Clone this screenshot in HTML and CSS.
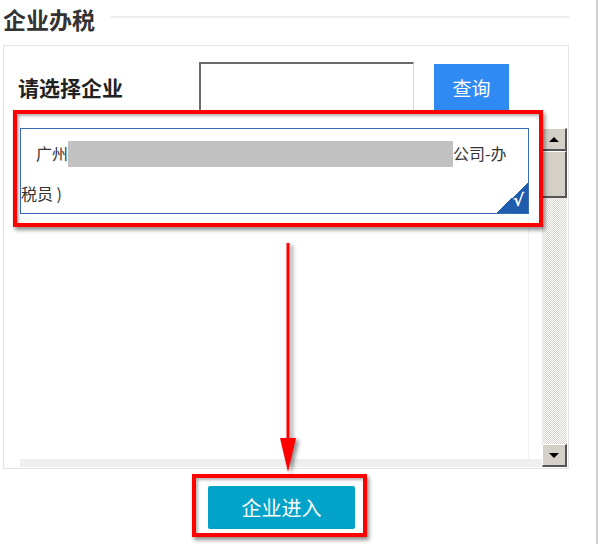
FILE: index.html
```html
<!DOCTYPE html>
<html lang="zh-CN">
<head>
  <meta charset="UTF-8">
  <title>企业办税</title>
  <link rel="stylesheet" href="styles.css">
</head>
<body>
  <div class="page">
    <div class="section-head">
      <h2>企业办税</h2>
      <div class="head-line"></div>
    </div>

    <div class="panel">
      <div class="search-row">
        <label class="search-label">请选择企业</label>
        <input class="search-input" type="text">
        <button class="btn-query">查询</button>
      </div>

      <div class="list-wrap">
        <div class="list">
          <div class="list-item">
            <span class="name">广州<span class="mask"></span>公司-办<br>税员 )</span>
            <span class="corner"><span class="tick">√</span></span>
          </div>
          <div class="list-fill"></div>
          <div class="list-hscroll"></div>
        </div>
        <div class="vscroll">
          <div class="sb-btn"><span class="arr-up"></span></div>
          <div class="sb-thumb"></div>
          <div class="sb-track"></div>
          <div class="sb-btn"><span class="arr-down"></span></div>
        </div>
      </div>
    </div>

    <div class="enter-row">
      <button class="btn-enter">企业进入</button>
    </div>

    <!-- annotations drawn over the screenshot -->
    <div class="mark mark-list"></div>
    <div class="mark mark-enter"></div>
    <svg class="arrow" width="24" height="236" viewBox="0 0 24 236">
      <line x1="11" y1="3" x2="11" y2="205" stroke="#f00" stroke-width="3"/>
      <polygon points="3,198 19,198 11,232" fill="#f00"/>
    </svg>
  </div>
</body>
</html>
```

FILE: styles.css
```css
* {
  box-sizing: border-box;
}
body {
  margin: 0;
  font-family: "Microsoft YaHei", "Noto Sans CJK SC", sans-serif;
  color: #333;
  background: #fff;
}
.page {
  position: relative;
  width: 598px;
  height: 544px;
  border-right: 2px solid #cfcfcf;
  padding: 6px 0 0 3px;
}
.section-head {
  display: flex;
  align-items: center;
  height: 26px;
}
.section-head h2 {
  margin: 0;
  font-size: 23px;
  font-weight: bold;
  color: #333;
  line-height: 26px;
}
.head-line {
  flex: 1;
  height: 2px;
  background: #eee;
  margin: 0 27px 0 16px;
  position: relative;
  top: -2px;
}
.panel {
  margin-top: 13px;
  width: 566px;
  height: 424px;
  border: 1px solid #e3e3e3;
  padding-top: 16px;
}
.search-row {
  display: flex;
  align-items: center;
  height: 50px;
}
.search-label {
  width: 195px;
  padding-left: 14px;
  font-size: 21px;
  font-weight: bold;
  color: #222;
}
.search-input {
  width: 215px;
  height: 50px;
  border-top: 2px solid #6b6b6b;
  border-left: 2px solid #6b6b6b;
  border-right: 1px solid #d8d8d8;
  border-bottom: 1px solid #d8d8d8;
  background: #fff;
  outline: none;
}
.btn-query {
  margin-left: 20px;
  width: 75px;
  height: 47px;
  border: none;
  background: #2f8bf3;
  color: #fff;
  font-family: inherit;
  font-size: 19px;
}
.list-wrap {
  display: flex;
  margin: 16px 1px 0 16px;
  height: 339px;
}
.list {
  flex: 1;
  display: flex;
  flex-direction: column;
}
.list-item {
  position: relative;
  width: 509px;
  height: 86px;
  border: 1px solid #3a6cbc;
  padding: 4px 0 0 0;
  font-size: 16px;
  line-height: 40px;
  color: #333;
}
.list-item .name {
  display: block;
  text-indent: 15px;
}
.mask {
  display: inline-block;
  width: 385px;
  height: 26px;
  background: #c1c1c1;
  vertical-align: -7px;
}
.corner {
  position: absolute;
  right: 0;
  bottom: 0;
  width: 32px;
  height: 30px;
  background: linear-gradient(to bottom right, transparent 50%, #1e5cae 50%);
}
.tick {
  position: absolute;
  right: 4px;
  bottom: -7px;
  color: #fff;
  font-family: "DejaVu Sans", sans-serif;
  font-size: 17px;
  font-weight: bold;
  text-indent: 0;
}
.list-fill {
  flex: 1;
  width: 509px;
  border-right: 1px solid #f3f3f3;
}
.list-hscroll {
  height: 8px;
  background: #efefef;
}
.vscroll {
  width: 25px;
  display: flex;
  flex-direction: column;
}
.sb-btn {
  height: 23px;
  background: #d4d0c8;
  border-top: 1px solid #fff;
  border-left: 1px solid #fff;
  border-right: 2px solid #555;
  border-bottom: 2px solid #555;
  display: flex;
  align-items: center;
  justify-content: center;
}
.arr-up {
  border-left: 5px solid transparent;
  border-right: 5px solid transparent;
  border-bottom: 5px solid #000;
}
.arr-down {
  border-left: 5px solid transparent;
  border-right: 5px solid transparent;
  border-top: 5px solid #000;
}
.sb-thumb {
  height: 47px;
  background: #d4d0c8;
  border-top: 1px solid #fff;
  border-left: 1px solid #fff;
  border-right: 2px solid #555;
  border-bottom: 2px solid #555;
}
.sb-track {
  flex: 1;
  background-color: #fff;
  background-image: repeating-conic-gradient(#d8d5ce 0 25%, #fff 0 50%);
  background-size: 2px 2px;
}
.enter-row {
  padding: 17px 0 0 205px;
}
.btn-enter {
  width: 147px;
  height: 43px;
  border: none;
  border-radius: 2px;
  background: #02a3c9;
  color: #fff;
  font-family: inherit;
  font-size: 20px;
}
.mark {
  position: absolute;
  border: 4px solid #f00;
  box-shadow: 2px 3px 4px rgba(0, 0, 0, 0.45), inset 2px 2px 3px rgba(0, 0, 0, 0.3);
}
.mark-list {
  left: 13px;
  top: 110px;
  width: 530px;
  height: 117px;
}
.mark-enter {
  left: 192px;
  top: 474px;
  width: 175px;
  height: 63px;
}
.arrow {
  position: absolute;
  left: 277px;
  top: 240px;
  filter: drop-shadow(3px 2px 2px rgba(0, 0, 0, 0.45));
}
```
